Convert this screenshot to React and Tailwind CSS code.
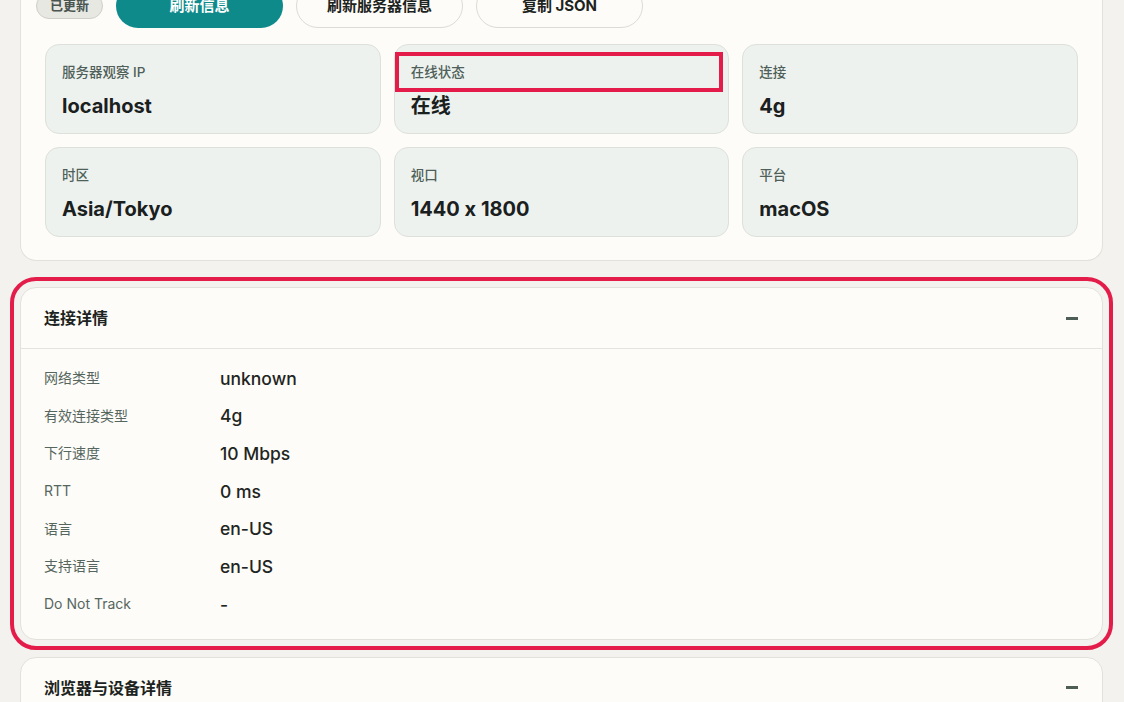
import React from 'react'

const summary = [
  { label: '服务器观察 IP', value: 'localhost' },
  { label: '在线状态', value: '在线', marked: true },
  { label: '连接', value: '4g' },
  { label: '时区', value: 'Asia/Tokyo' },
  { label: '视口', value: '1440 x 1800' },
  { label: '平台', value: 'macOS' },
]

const connection = [
  ['网络类型', 'unknown'],
  ['有效连接类型', '4g'],
  ['下行速度', '10 Mbps'],
  ['RTT', '0 ms'],
  ['语言', 'en-US'],
  ['支持语言', 'en-US'],
  ['Do Not Track', '-'],
]

const Minus = () => <span className="block w-[12px] h-[3px] bg-[#4d5e57]" />

const Section = ({ title, rows, highlighted, className }) => (
  <div
    className={
      'rounded-[16px] border border-[#e2e1db] bg-[#fdfcf8] ' +
      (highlighted ? 'outline-4 outline-[#e31c4a] outline-offset-[6px] ' : '') +
      className
    }
  >
    <div className="flex items-center justify-between h-[61px] pl-[23px] pr-[24px] border-b border-[#e4e3dd]">
      <h2 className="text-[16px] font-bold text-[#1c2320]">{title}</h2>
      <Minus />
    </div>
    {rows && (
      <div className="pl-[23px] pr-[24px] pt-[11px] pb-[15px] grid grid-cols-[176px_1fr] auto-rows-[37.7px] items-center">
        {rows.map(([k, v]) => (
          <React.Fragment key={k}>
            <div className="text-[14px] text-[#56665f] -mt-[3px]">{k}</div>
            <div className="text-[17.5px] font-medium text-[#1f2522]">{v}</div>
          </React.Fragment>
        ))}
      </div>
    )}
  </div>
)

export default function App() {
  return (
    <div className="h-[702px] overflow-hidden bg-[#f3f2ee] pl-[20px] pr-[21px] font-['Inter','Noto_Sans_CJK_SC',sans-serif] [font-feature-settings:'calt'_0]">
      {/* Overview card */}
      <div className="-mt-[40px] rounded-b-[16px] border border-t-0 border-[#e2e1db] bg-[#fdfcf8] pt-[24px] px-[24px] pb-[23px]">
        <div className="flex items-center gap-[13px] -ml-[9px]">
          <span className="h-[26px] w-[67px] flex items-center justify-center rounded-full border border-[#cfcfc8] bg-[#e8e8e2] text-[13px] font-bold text-[#4a5450]">
            已更新
          </span>
          <button className="w-[167px] h-[44px] rounded-full bg-[#0f8a8b] text-white text-[15px] font-bold">
            刷新信息
          </button>
          <button className="w-[167px] h-[44px] rounded-full border border-[#dcdbd5] bg-[#fdfcf8] text-[#1c2320] text-[15px] font-bold">
            刷新服务器信息
          </button>
          <button className="w-[167px] h-[44px] rounded-full border border-[#dcdbd5] bg-[#fdfcf8] text-[#1c2320] text-[15px] font-bold">
            复制 JSON
          </button>
        </div>

        <div className="mt-[16px] grid grid-cols-3 gap-[13px]">
          {summary.map((s) => (
            <div
              key={s.label}
              className="relative h-[90px] rounded-[14px] border border-[#dde0db] bg-[#eef2ef] px-[16px] pt-[17px]"
            >
              <div className="text-[13.5px] leading-[20px] font-medium text-[#4f5f59]">{s.label}</div>
              <div className="mt-[10px] text-[20px] leading-[28px] font-bold text-[#1a201d]">{s.value}</div>
              {s.marked && (
                <div className="absolute left-[0px] top-[7px] w-[328px] h-[40px] border-4 border-[#e31c4a]" />
              )}
            </div>
          ))}
        </div>
      </div>

      <Section title="连接详情" rows={connection} highlighted className="mt-[26px]" />
      <Section title="浏览器与设备详情" className="mt-[17px]" />
    </div>
  )
}
